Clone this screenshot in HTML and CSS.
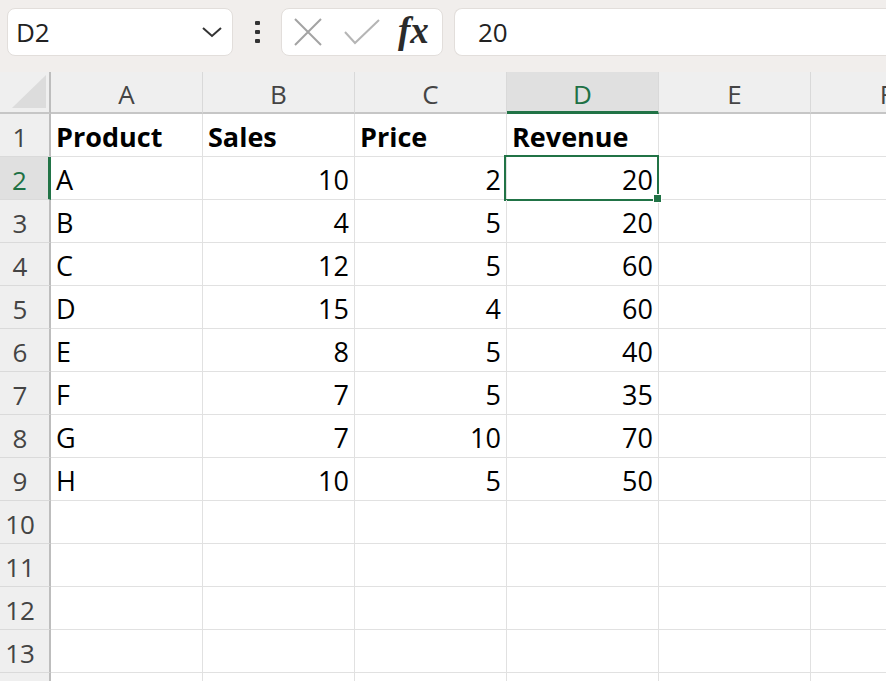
FILE: index.html
```html
<!DOCTYPE html>
<html lang="en">
<head>
  <meta charset="UTF-8" />
  <title>Sheet</title>
  <link rel="stylesheet" href="styles.css">
</head>
<body>
  <div class="toolbar">
    <div class="name-box">
      <span>D2</span>
      <svg class="chevron" width="22" height="12" viewBox="0 0 22 12"><path d="M2 2 L11 10 L20 2" fill="none" stroke="#333" stroke-width="2"/></svg>
    </div>
    <div class="dots"><i></i><i></i><i></i></div>
    <div class="fx-box">
      <svg width="30" height="30" viewBox="0 0 30 30"><path d="M2 2 L28 28 M28 2 L2 28" stroke="#a3a3a3" stroke-width="2" fill="none"/></svg>
      <svg class="check" width="38" height="28" viewBox="0 0 38 28"><path d="M2 14 L12 25 L36 2" stroke="#b5b5b5" stroke-width="2" fill="none"/></svg>
      <span class="fx">fx</span>
    </div>
    <div class="formula">20</div>
  </div>

  <div class="sheet">
    <div class="corner"><svg width="36" height="36" viewBox="0 0 36 36"><polygon points="35,1 35,34 1,34" fill="#dcdcdc"/></svg></div>
    <div class="col-head">A</div>
    <div class="col-head">B</div>
    <div class="col-head">C</div>
    <div class="col-head active">D</div>
    <div class="col-head">E</div>
    <div class="col-head">F</div>

    <div class="row-head">1</div>
    <div class="cell bold">Product</div>
    <div class="cell bold">Sales</div>
    <div class="cell bold">Price</div>
    <div class="cell bold">Revenue</div>
    <div class="cell"></div>
    <div class="cell"></div>

    <div class="row-head active">2</div>
    <div class="cell">A</div>
    <div class="cell num">10</div>
    <div class="cell num">2</div>
    <div class="cell num selected">20</div>
    <div class="cell"></div>
    <div class="cell"></div>

    <div class="row-head">3</div>
    <div class="cell">B</div>
    <div class="cell num">4</div>
    <div class="cell num">5</div>
    <div class="cell num">20</div>
    <div class="cell"></div>
    <div class="cell"></div>

    <div class="row-head">4</div>
    <div class="cell">C</div>
    <div class="cell num">12</div>
    <div class="cell num">5</div>
    <div class="cell num">60</div>
    <div class="cell"></div>
    <div class="cell"></div>

    <div class="row-head">5</div>
    <div class="cell">D</div>
    <div class="cell num">15</div>
    <div class="cell num">4</div>
    <div class="cell num">60</div>
    <div class="cell"></div>
    <div class="cell"></div>

    <div class="row-head">6</div>
    <div class="cell">E</div>
    <div class="cell num">8</div>
    <div class="cell num">5</div>
    <div class="cell num">40</div>
    <div class="cell"></div>
    <div class="cell"></div>

    <div class="row-head">7</div>
    <div class="cell">F</div>
    <div class="cell num">7</div>
    <div class="cell num">5</div>
    <div class="cell num">35</div>
    <div class="cell"></div>
    <div class="cell"></div>

    <div class="row-head">8</div>
    <div class="cell">G</div>
    <div class="cell num">7</div>
    <div class="cell num">10</div>
    <div class="cell num">70</div>
    <div class="cell"></div>
    <div class="cell"></div>

    <div class="row-head">9</div>
    <div class="cell">H</div>
    <div class="cell num">10</div>
    <div class="cell num">5</div>
    <div class="cell num">50</div>
    <div class="cell"></div>
    <div class="cell"></div>

    <div class="row-head">10</div>
    <div class="cell"></div><div class="cell"></div><div class="cell"></div>
    <div class="cell"></div><div class="cell"></div><div class="cell"></div>

    <div class="row-head">11</div>
    <div class="cell"></div><div class="cell"></div><div class="cell"></div>
    <div class="cell"></div><div class="cell"></div><div class="cell"></div>

    <div class="row-head">12</div>
    <div class="cell"></div><div class="cell"></div><div class="cell"></div>
    <div class="cell"></div><div class="cell"></div><div class="cell"></div>

    <div class="row-head">13</div>
    <div class="cell"></div><div class="cell"></div><div class="cell"></div>
    <div class="cell"></div><div class="cell"></div><div class="cell"></div>

    <div class="row-head"></div>
    <div class="cell"></div><div class="cell"></div><div class="cell"></div>
    <div class="cell"></div><div class="cell"></div><div class="cell"></div>
  </div>
</body>
</html>
```

FILE: styles.css
```css
body {
  margin: 0;
  height: 681px;
  overflow: hidden;
  font-family: 'Open Sans', sans-serif;
  background: white;
}
.toolbar {
  display: flex;
  align-items: center;
  height: 72px;
  padding: 8px 0 16px 7px;
  box-sizing: border-box;
  background-color: #f1eeec;
}
.name-box, .fx-box, .formula {
  height: 48px;
  box-sizing: border-box;
  background-color: white;
  border: 1px solid #e2dedb;
  border-radius: 8px;
  display: flex;
  align-items: center;
}
.name-box {
  width: 226px;
  padding: 0 9px 0 8px;
  justify-content: space-between;
  font-size: 26px;
  color: #222;
}
.dots {
  width: 48px;
  display: flex;
  flex-direction: column;
  align-items: center;
  gap: 5px;
}
.dots i {
  width: 5px;
  height: 4px;
  border-radius: 1px;
  background-color: #333;
}
.fx-box {
  width: 162px;
  padding-left: 11px;
}
.check {
  margin-left: 20px;
}
.fx {
  margin-left: 17px;
  font-family: 'Liberation Serif', serif;
  font-style: italic;
  font-weight: bold;
  font-size: 37px;
  color: #2b2b2b;
  line-height: 1;
  margin-top: -3px;
}
.formula {
  margin-left: 11px;
  flex: 1;
  border-right: none;
  border-radius: 8px 0 0 8px;
  padding-left: 23px;
  font-size: 26px;
  color: #222;
}
.sheet {
  display: grid;
  grid-template-columns: 51px repeat(6, 152px);
  grid-template-rows: 42px;
  grid-auto-rows: 43px;
}
.corner, .col-head, .row-head {
  background-color: #efefef;
  color: #444;
  font-size: 26px;
  box-sizing: border-box;
}
.corner {
  border-right: 2px solid #bdbdbd;
  border-bottom: 2px solid #c6c6c6;
  display: flex;
  align-items: center;
  justify-content: flex-end;
  padding-right: 2px;
}
.col-head {
  border-right: 1px solid #d9d9d9;
  border-bottom: 2px solid #c6c6c6;
  text-align: center;
  line-height: 42px;
  padding-top: 1px;
}
.col-head.active {
  background-color: #e0e0e0;
  color: #1e7145;
  border-bottom: 3px solid #217346;
}
.row-head {
  border-right: 2px solid #bdbdbd;
  border-bottom: 1px solid #dadada;
  text-align: center;
  padding: 2px 9px 0 0;
  line-height: 42px;
}
.row-head.active {
  background-color: #e0e0e0;
  color: #1e7145;
  border-right: 3px solid #217346;
}
.cell {
  position: relative;
  box-sizing: border-box;
  border-right: 1px solid #e1e1e1;
  border-bottom: 1px solid #e1e1e1;
  padding: 2px 5px 0 5px;
  font-size: 27px;
  line-height: 42px;
  color: #000;
  white-space: nowrap;
}
.cell.bold {
  font-weight: bold;
}
.cell.num {
  text-align: right;
}
.cell.selected::after {
  content: "";
  position: absolute;
  top: -2px;
  left: -3px;
  right: -1px;
  bottom: -2px;
  border: 2px solid #217346;
}
.cell.selected::before {
  content: "";
  position: absolute;
  right: -4px;
  bottom: -4px;
  width: 7px;
  height: 7px;
  background-color: #217346;
  border: 1px solid white;
  z-index: 1;
}
```
